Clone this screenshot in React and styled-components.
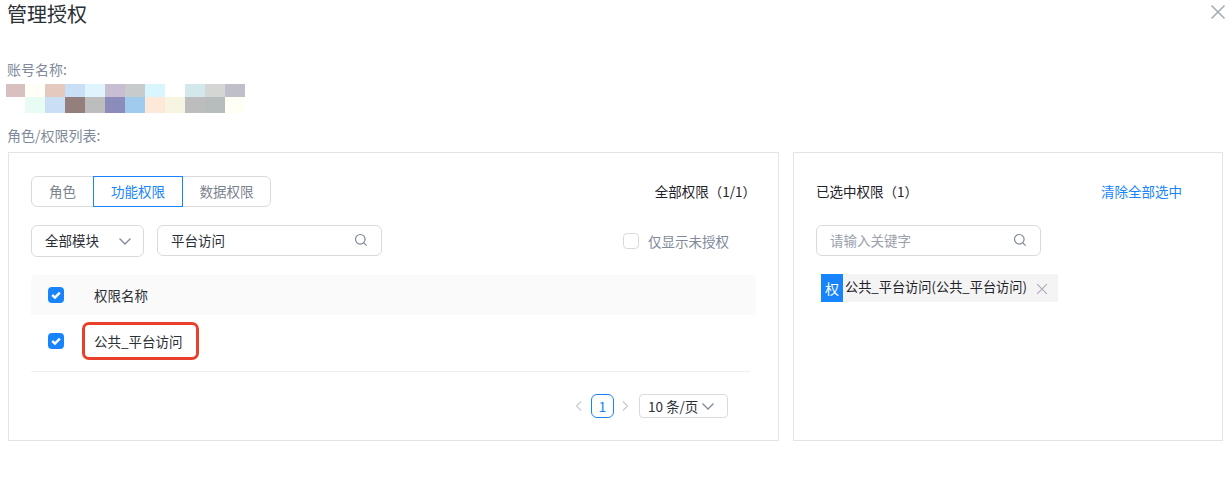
import React from 'react';
import styled, { createGlobalStyle } from 'styled-components';

const GlobalStyle = createGlobalStyle`
  html, body {
    margin: 0;
    padding: 0;
    background: #fff;
  }
  * {
    box-sizing: border-box;
  }
  body {
    font-family: "Noto Sans CJK SC", "Liberation Sans", sans-serif;
  }
`;

const mosaic_top = ['#d9c0c0', '#fffff8', '#e4c9bf', '#c9dff5', '#e0f4fe', '#c8bed4', '#c8cbcb', '#d9f5fe', '#ffffff', '#d3e8ea', '#d4d6d4', '#bfbfc9'];
const mosaic_bottom = ['#ffffff', '#e8fcf4', '#c9dff5', '#957f7d', '#bdbdbd', '#8b8cba', '#a0cbee', '#fee9d8', '#f5f5e1', '#bdbdbd', '#b6bebd', '#fffff6'];

const Page = styled.div`
  position: relative;
  width: 1232px;
  height: 479px;
  padding: 0 9px 0 8px;
  overflow: hidden;
  background: #fff;
`;
const Title = styled.h1`
  margin: 0 0 0 -1px;
  height: 28px;
  font-size: 20px;
  font-weight: 400;
  line-height: 28px;
  color: #2b2f36;
`;
const CloseButton = styled.span`
  position: absolute;
  top: 4px;
  right: 6px;
  width: 16px;
  height: 16px;
  color: #a3a9b5;
  svg { display: block; }
`;
const Label = styled.div`
  height: 20px;
  margin: ${p => p.$top || 0}px 0 0 -1px;
  font-size: 14px;
  line-height: 20px;
  color: #808a9a;
`;
const Mosaic = styled.div`
  display: grid;
  grid-template-columns: 19px repeat(11, 20px);
  grid-template-rows: 13px 16px;
  margin: 5px 0 12px -2px;
  width: 239px;
`;
const MosaicCell = styled.span`
  background: ${p => p.$color};
`;
const Panels = styled.div`
  display: flex;
  gap: 14px;
  margin-top: 7px;
`;
const Panel = styled.section`
  position: relative;
  width: ${p => p.$width}px;
  height: 289px;
  border: 1px solid #e2e4ea;
  padding: ${p => p.$padding};
`;
const TopRow = styled.div`
  display: flex;
  align-items: center;
  justify-content: space-between;
  height: 31px;
`;
const Segments = styled.div`
  display: flex;
  height: 31px;
  border: 1px solid #d9dade;
  border-radius: 6px;
`;
const Segment = styled.div`
  width: ${p => p.$width}px;
  margin: -1px 0;
  padding-bottom: 2px;
  display: flex;
  align-items: center;
  justify-content: center;
  font-size: 13.5px;
  color: ${p => (p.$active ? '#1784fc' : '#7b8290')};
  border: 1px solid ${p => (p.$active ? '#1784fc' : 'transparent')};
`;
const Count = styled.div`
  margin-bottom: 2px;
  font-size: 13.5px;
  color: #1f2329;
`;
const LinkText = styled.a`
  margin: 0 17px 2px 0;
  font-size: 13.5px;
  color: #1784fc;
  cursor: pointer;
`;
const FilterRow = styled.div`
  display: flex;
  align-items: flex-start;
  gap: 13px;
  margin-top: 18px;
  height: 32px;
`;
const SelectBox = styled.div`
  width: 113px;
  height: 32px;
  display: flex;
  align-items: center;
  justify-content: space-between;
  padding: 0 11px 2px 13px;
  border: 1px solid #d9dade;
  border-radius: 6px;
  font-size: 13.5px;
  color: #2b2f36;
  svg { color: #7f8896; margin-top: 2px; }
`;
const SearchBox = styled.div`
  width: 225px;
  height: 31px;
  display: flex;
  align-items: center;
  justify-content: space-between;
  padding: 0 13px 2px;
  border: 1px solid #d9dade;
  border-radius: 6px;
  font-size: 13.5px;
  color: ${p => (p.$empty ? '#9aa1ad' : '#2b2f36')};
  svg { color: #7f8896; flex: none; }
`;
const OnlyUnauth = styled.label`
  display: flex;
  align-items: center;
  gap: 9px;
  height: 32px;
  margin-left: auto;
  margin-right: 27px;
  font-size: 13.5px;
  color: #808a9a;
`;
const EmptyCheck = styled.span`
  width: 16px;
  height: 16px;
  border: 1px solid #d9dade;
  border-radius: 4px;
`;
const TableHead = styled.div`
  display: flex;
  align-items: center;
  width: 725px;
  height: 40px;
  margin-top: 18px;
  padding-left: 17px;
  gap: 30px;
  background: #fafafa;
  border-radius: 4px 4px 0 0;
  font-size: 13.5px;
  color: #2b2f36;
`;
const TableRow = styled.div`
  display: flex;
  align-items: center;
  width: 719px;
  height: 57px;
  padding: 0 0 5px 17px;
  gap: 30px;
  border-bottom: 1px solid #eceef1;
  font-size: 13.5px;
  color: #2b2f36;
`;
const CheckMark = styled.span`
  width: 16px;
  height: 16px;
  border-radius: 4px;
  background: #1784fc;
  display: flex;
  align-items: center;
  justify-content: center;
  svg { display: block; }
`;
const NameCell = styled.span`
  position: relative;
`;
const Highlight = styled.span`
  position: absolute;
  left: -12px;
  right: -16px;
  top: 50%;
  height: 38px;
  transform: translateY(-50%);
  border: 3px solid #e8402a;
  border-radius: 7px;
`;
const Pager = styled.div`
  display: flex;
  align-items: center;
  justify-content: flex-end;
  width: 697px;
  height: 24px;
  margin-top: 22px;
  color: #c5c9d0;
`;
const PageNum = styled.span`
  width: 23px;
  height: 24px;
  margin: 0 7px 0 8px;
  border: 1px solid #1784fc;
  border-radius: 6px;
  color: #1784fc;
  font-size: 14px;
  display: flex;
  align-items: center;
  justify-content: center;
`;
const PageSize = styled.div`
  width: 89px;
  height: 24px;
  margin-left: 10px;
  display: flex;
  align-items: center;
  justify-content: space-between;
  padding: 0 12px 0 8px;
  border: 1px solid #d9dade;
  border-radius: 4px;
  font-size: 13.5px;
  color: #2b2f36;
  svg { color: #7f8896; }
`;
const Tag = styled.div`
  display: flex;
  align-items: center;
  width: 237px;
  height: 28px;
  margin: 17px 0 0 5px;
  background: #f4f4f5;
  font-size: 13.2px;
  color: #1f2329;
  svg { color: #a3a9b5; margin: 2px 0 0 9px; flex: none; }
`;
const TagMark = styled.span`
  width: 22px;
  height: 28px;
  margin-right: 2px;
  background: #1784fc;
  color: #fff;
  font-size: 14px;
  display: flex;
  align-items: center;
  justify-content: center;
`;
const TagText = styled.span`
  margin-bottom: 3px;
`;

const SearchIcon = () => (
  <svg width="14" height="14" viewBox="0 0 14 14" fill="none" stroke="currentColor" strokeWidth="1.2">
    <circle cx="6.3" cy="6.3" r="4.8" />
    <path d="M9.8 9.8L12.6 12.6" />
  </svg>
);
const Chevron = ({ size = 14 }) => (
  <svg width={size} height={size} viewBox="0 0 14 14" fill="none" stroke="currentColor" strokeWidth="1.3">
    <path d="M1.5 4.5L7 10L12.5 4.5" />
  </svg>
);
const Arrow = ({ d }) => (
  <svg width="8" height="12" viewBox="0 0 8 12" fill="none" stroke="currentColor" strokeWidth="1.1">
    <path d={d} />
  </svg>
);
const Cross = ({ size, weight = 1.5 }) => (
  <svg width={size} height={size} viewBox="0 0 16 16" fill="none" stroke="currentColor" strokeWidth={weight}>
    <path d="M1.5 1.5L14.5 14.5M14.5 1.5L1.5 14.5" />
  </svg>
);
const Tick = () => (
  <svg width="12" height="12" viewBox="0 0 12 12" fill="none" stroke="#fff" strokeWidth="2.4">
    <path d="M2.2 6L5 8.6L9.8 3.6" />
  </svg>
);

const App = () => {
  return (
    <Page>
      <GlobalStyle />
      <Title>管理授权</Title>
      <CloseButton><Cross size={16} /></CloseButton>
      <Label $top={31}>账号名称:</Label>
      <Mosaic>
        {mosaic_top.concat(mosaic_bottom).map((color, i) => (
          <MosaicCell key={i} $color={color} />
        ))}
      </Mosaic>
      <Label>角色/权限列表:</Label>
      <Panels>
        <Panel $width={771} $padding="23px 22px 0 22px">
          <TopRow>
            <Segments>
              <Segment $width={61}>角色</Segment>
              <Segment $width={90} $active>功能权限</Segment>
              <Segment $width={87}>数据权限</Segment>
            </Segments>
            <Count>全部权限（1/1）</Count>
          </TopRow>
          <FilterRow>
            <SelectBox>全部模块<Chevron /></SelectBox>
            <SearchBox>平台访问<SearchIcon /></SearchBox>
            <OnlyUnauth><EmptyCheck />仅显示未授权</OnlyUnauth>
          </FilterRow>
          <TableHead>
            <CheckMark><Tick /></CheckMark>
            权限名称
          </TableHead>
          <TableRow>
            <CheckMark><Tick /></CheckMark>
            <NameCell>公共_平台访问<Highlight /></NameCell>
          </TableRow>
          <Pager>
            <Arrow d="M6 1.5L1.5 6L6 10.5" />
            <PageNum>1</PageNum>
            <Arrow d="M2 1.5L6.5 6L2 10.5" />
            <PageSize>10 条/页<Chevron /></PageSize>
          </Pager>
        </Panel>
        <Panel $width={430} $padding="23px 23px 0 22px">
          <TopRow>
            <Count>已选中权限（1）</Count>
            <LinkText>清除全部选中</LinkText>
          </TopRow>
          <FilterRow>
            <SearchBox $empty>请输入关键字<SearchIcon /></SearchBox>
          </FilterRow>
          <Tag>
            <TagMark>权</TagMark>
            <TagText>公共_平台访问(公共_平台访问)</TagText>
            <Cross size={12} weight={1.4} />
          </Tag>
        </Panel>
      </Panels>
    </Page>
  );
};

export default App;
